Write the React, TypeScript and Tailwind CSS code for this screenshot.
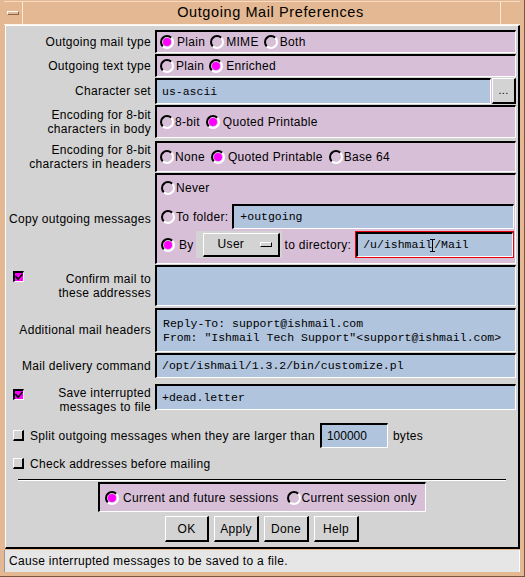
import React from "react";

const sans = { fontFamily: '"Liberation Sans", Arial, sans-serif' };
const mono = { fontFamily: '"Liberation Mono", "DejaVu Sans Mono", monospace' };

const Radio = ({ on, label, gap = "ml-[3px]" }: { on?: boolean; label: string; gap?: string }) => (
  <span className="flex items-center">
    <span className="w-[14px] h-[14px] shrink-0 rounded-full border-2 border-t-black border-l-black border-r-white border-b-white flex items-center justify-center">
      {on && <span className="w-[8px] h-[8px] rounded-full bg-[#ff00ff]" />}
    </span>
    <span className={gap}>{label}</span>
  </span>
);

const Check = ({ on }: { on?: boolean }) =>
  on ? (
    <span className="w-[11px] h-[11px] shrink-0 bg-[#ff00ff] border-t-2 border-l-2 border-t-black border-l-black border-r border-b border-r-white border-b-white flex items-center justify-center">
      <svg width="9" height="8" viewBox="0 0 9 8">
        <path d="M0.5 3 L3.5 6.5 L8.5 0.5" stroke="black" strokeWidth="1.8" fill="none" />
      </svg>
    </span>
  ) : (
    <span className="w-[11px] h-[11px] shrink-0 bg-[#d3d3d3] border-t border-l border-t-white border-l-white border-r-2 border-b-2 border-r-black border-b-black" />
  );

const field =
  "bg-[#b0c4de] border-t-2 border-l-2 border-t-black border-l-black border-r border-b border-r-white border-b-white text-[11.5px] tracking-normal text-black";
const panel =
  "bg-[#d8bfd8] border-t-2 border-l-2 border-t-black border-l-black border-r border-b border-r-white border-b-white";
const button =
  "bg-[#d3d3d3] border-t border-l border-t-white border-l-white border-r-2 border-b-2 border-r-black border-b-black flex items-center justify-center";

const Label = ({ children }: { children: React.ReactNode }) => (
  <div className="w-[149px] shrink-0 pr-[4px] text-right leading-[14px]">{children}</div>
);

export default function App() {
  return (
    <div className="w-[525px] h-[577px] bg-[#e3b892] flex flex-col text-[12px] tracking-[0.3px] text-black border-r border-b border-r-[#7a5638] border-b-[#7a5638]" style={sans}>
      {/* title bar */}
      <div className="h-[24px] flex mx-[4px] mt-[1px] border-t border-t-[#f6dcc4] border-b border-b-[#fff2e6]">
        <div className="w-[19px] flex items-center justify-center border-r border-r-[#fbe8d6]">
          <div className="w-[12px] h-[4px] border-t border-l border-t-white border-l-white border-r border-b border-r-[#8a6446] border-b-[#8a6446]" />
        </div>
        <div className="flex-1 flex items-center justify-center pl-[18px] text-[14.5px] tracking-[0.6px]">Outgoing Mail Preferences</div>
        <div className="w-[20px] border-l border-l-[#fbe8d6]" />
      </div>

      {/* content */}
      <div className="ml-[5px] mr-[4px] h-[524px] bg-[#d3d3d3] border-l border-t border-l-white border-t-white border-r-2 border-b-2 border-r-black border-b-black flex flex-col">
        {/* mail type */}
        <div className="flex items-center h-[23px] mt-[4px]">
          <Label>Outgoing mail type</Label>
          <div className={`${panel} flex-1 mr-[2px] h-full flex items-center gap-[5px] pl-[3px]`}>
            <Radio on label="Plain" />
            <Radio label="MIME" gap="ml-[2px]" />
            <Radio label="Both" gap="ml-[2px]" />
          </div>
        </div>
        {/* text type */}
        <div className="flex items-center h-[23px] mt-[1px]">
          <Label>Outgoing text type</Label>
          <div className={`${panel} flex-1 mr-[2px] h-full flex items-center gap-[5px] pl-[3px]`}>
            <Radio label="Plain" gap="ml-[2px]" />
            <Radio on label="Enriched" />
          </div>
        </div>
        {/* character set */}
        <div className="flex items-center h-[26px] mt-[1px]">
          <Label>Character set</Label>
          <div className="flex-1 mr-[2px] h-full flex bg-[#d8bfd8]">
            <div className={`${field} flex-1 h-full flex items-center pl-[5px]`} style={mono}>us-ascii</div>
            <div className={`${button} w-[24px] h-full ml-px text-[11px]`}>...</div>
          </div>
        </div>
        {/* body encoding */}
        <div className="flex items-center h-[33px] mt-[1px]">
          <Label>
            Encoding for 8-bit
            <br />
            characters in body
          </Label>
          <div className={`${panel} flex-1 mr-[2px] h-full flex items-center gap-[6px] pl-[3px]`}>
            <Radio label="8-bit" gap="ml-[1px]" />
            <Radio on label="Quoted Printable" />
          </div>
        </div>
        {/* header encoding */}
        <div className="flex items-center h-[31px] mt-[3px]">
          <Label>
            Encoding for 8-bit
            <br />
            characters in headers
          </Label>
          <div className={`${panel} flex-1 mr-[2px] h-full flex items-center gap-[6px] pl-[3px]`}>
            <Radio label="None" gap="ml-[1px]" />
            <Radio on label="Quoted Printable" />
            <Radio label="Base 64" gap="ml-[1px]" />
          </div>
        </div>
        {/* copy outgoing */}
        <div className="flex items-center h-[91px] mt-[1px]">
          <Label>Copy outgoing messages</Label>
          <div className={`${panel} flex-1 mr-[2px] h-full flex flex-col pl-[4px] pr-px`}>
            <div className="h-[24px] flex items-center mt-px">
              <Radio label="Never" gap="ml-px" />
            </div>
            <div className="h-[25px] flex items-center mt-[4px]">
              <Radio label="To folder:" gap="ml-px" />
              <div className={`${field} ml-[4px] flex-1 h-full flex items-center pl-[6px]`} style={mono}>+outgoing</div>
            </div>
            <div className="h-[27px] flex items-center mt-[2px]">
              <Radio on label="By" gap="ml-[4px]" />
              <div className="ml-[2px] h-full w-[86px] bg-[#d3d3d3] flex items-center pl-[7px] pr-[2px]">
                <div className={`${button} !justify-between h-[24px] w-full pl-[14px] pr-[6px]`}>
                  <span>User</span>
                  <span className="w-[12px] h-[5px] border-t border-l border-t-white border-l-white border-r border-b border-r-black border-b-black" />
                </div>
              </div>
              <span className="ml-[3px]">to directory:</span>
              <div className="ml-[4px] flex-1 h-full border border-red-600">
                <div className={`${field} h-full flex items-center pl-[5px]`} style={mono}>
                  <span>/u/ishmail</span>
                  <svg width="5" height="13" viewBox="0 0 5 13" className="-ml-[2px] -mr-[1px]">
                    <path d="M0 0.5 H5 M2.5 0.5 V12.5 M0 12.5 H5" stroke="black" strokeWidth="1" fill="none" />
                  </svg>
                  <span>/Mail</span>
                </div>
              </div>
            </div>
          </div>
        </div>
        {/* confirm */}
        <div className="flex h-[41px] mt-[1px]">
          <div className="w-[149px] shrink-0 flex pl-[7px] pt-[6px]">
            <Check on />
            <div className="flex-1 pr-[4px] text-right leading-[14px] pt-[1px]">
              Confirm mail to
              <br />
              these addresses
            </div>
          </div>
          <div className={`${field} flex-1 mr-[2px] h-full`} />
        </div>
        {/* additional headers */}
        <div className="flex items-center h-[44px] mt-[2px]">
          <Label>Additional mail headers</Label>
          <div className={`${field} flex-1 mr-[2px] h-full flex flex-col justify-center pl-[6px] leading-[14px] whitespace-pre`} style={mono}>
            <span>Reply-To: support@ishmail.com</span>
            <span>From: "Ishmail Tech Support"&lt;support@ishmail.com&gt;</span>
          </div>
        </div>
        {/* delivery command */}
        <div className="flex items-center h-[25px] mt-px">
          <Label>Mail delivery command</Label>
          <div className={`${field} flex-1 mr-[2px] h-full flex items-center pl-[5px]`} style={mono}>/opt/ishmail/1.3.2/bin/customize.pl</div>
        </div>
        {/* save interrupted */}
        <div className="flex h-[26px] mt-[6px]">
          <div className="w-[149px] shrink-0 flex pl-[7px] pt-[5px]">
            <Check on />
            <div className="flex-1 pr-[4px] text-right leading-[14px] mt-[-3px]">
              Save interrupted
              <br />
              messages to file
            </div>
          </div>
          <div className={`${field} flex-1 mr-[2px] h-full flex items-center pl-[5px]`} style={mono}>+dead.letter</div>
        </div>
        {/* split */}
        <div className="flex items-center h-[25px] mt-[13px] pl-[7px]">
          <Check />
          <span className="ml-[6px]">Split outgoing messages when they are larger than</span>
          <div className={`${field} w-[68px] h-full ml-[5px] flex items-center pl-[5px] !text-[12px]`} style={sans}>100000</div>
          <span className="ml-[5px]">bytes</span>
        </div>
        {/* check addresses */}
        <div className="flex items-center h-[17px] mt-[7px] pl-[7px]">
          <Check />
          <span className="ml-[6px]">Check addresses before mailing</span>
        </div>
        {/* separator */}
        <div className="mt-[7px] mx-[12px] h-[2px] border-t border-t-black border-b border-b-white" />
        {/* sessions */}
        <div className="flex justify-center mt-px">
          <div className={`${panel} w-[328px] h-[30px] flex items-center gap-[8px] pl-[5px]`}>
            <Radio on label="Current and future sessions" gap="ml-[4px]" />
            <Radio label="Current session only" gap="ml-px" />
          </div>
        </div>
        {/* buttons */}
        <div className="flex justify-center gap-[5px] mt-[4px] h-[26px]">
          <div className={`${button} w-[44px]`}>OK</div>
          <div className={`${button} w-[45px]`}>Apply</div>
          <div className={`${button} w-[45px]`}>Done</div>
          <div className={`${button} w-[45px]`}>Help</div>
        </div>
      </div>

      {/* status bar */}
      <div className="mx-[4px] mt-px h-[22px] bg-[#e6e6e6] border-l border-l-[#999] border-r border-r-white flex items-center pl-[4px]">
        Cause interrupted messages to be saved to a file.
      </div>
    </div>
  );
}
